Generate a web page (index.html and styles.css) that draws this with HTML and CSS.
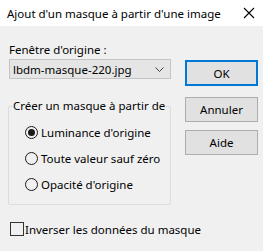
FILE: index.html
```html
<!DOCTYPE html>
<html lang="fr">
<head>
    <meta charset="UTF-8">
    <title>Ajout d'un masque à partir d'une image</title>
    <link rel="stylesheet" href="styles.css">
</head>
<body>
    <div class="titlebar">
        <span class="title">Ajout d'un masque à partir d'une image</span>
        <svg class="close" width="12" height="12" viewBox="0 0 12 12">
            <path d="M1 1 L11 11 M11 1 L1 11" stroke="#000" stroke-width="1.1" fill="none"/>
        </svg>
    </div>
    <div class="dialog">
        <div class="main">
            <div class="field-label">Fenêtre d'origine :</div>
            <div class="select">
                <span>lbdm-masque-220.jpg</span>
                <svg class="chevron" width="9" height="5" viewBox="0 0 9 5">
                    <path d="M0.5 0.5 L4.5 4.5 L8.5 0.5" stroke="#444" stroke-width="1" fill="none"/>
                </svg>
            </div>
            <fieldset class="group">
                <legend>Créer un masque à partir de</legend>
                <div class="radio checked"><span class="circle"></span>Luminance d'origine</div>
                <div class="radio"><span class="circle"></span>Toute valeur sauf zéro</div>
                <div class="radio"><span class="circle"></span>Opacité d'origine</div>
            </fieldset>
            <div class="check"><span class="box"></span>Inverser les données du masque</div>
        </div>
        <div class="buttons">
            <button class="btn default">OK</button>
            <button class="btn">Annuler</button>
            <button class="btn">Aide</button>
        </div>
    </div>
</body>
</html>
```

FILE: styles.css
```css
body {
    margin: 0;
    background-color: #f0f0f0;
    font-family: "Noto Sans", sans-serif;
    font-size: 11.5px;
    color: #000;
}
.titlebar {
    height: 26px;
    background-color: #fff;
    display: flex;
    align-items: center;
    justify-content: space-between;
    padding: 0 7px 0 7px;
}
.close {
    margin-right: 1px;
}
.dialog {
    display: flex;
    padding: 16px 0 0 8px;
}
.main {
    width: 163px;
    flex-shrink: 0;
    white-space: nowrap;
}
.field-label {
    line-height: 16px;
    margin-left: 1px;
}
.select {
    margin: 1px 0 0 1px;
    height: 18px;
    border: 1px solid #c4c4c4;
    background-color: #e5e5e5;
    display: flex;
    align-items: center;
    justify-content: space-between;
    padding: 0 6px 0 3px;
}
.group {
    margin: 19px 0 0 0;
    padding: 5px 0 7px 3px;
    border: 1px solid #dcdcdc;
    border-radius: 2px;
    width: 158px;
}
.group legend {
    padding: 0 1px;
    line-height: 16px;
}
.radio {
    height: 26px;
    display: flex;
    align-items: center;
    padding-left: 13px;
}
.circle {
    flex-shrink: 0;
    width: 11px;
    height: 11px;
    border: 1px solid #1a1a1a;
    border-radius: 50%;
    margin-right: 3px;
    display: flex;
    align-items: center;
    justify-content: center;
}
.radio.checked .circle::after {
    content: "";
    width: 7px;
    height: 7px;
    border-radius: 50%;
    background-color: #1a1a1a;
}
.check {
    margin-top: 16px;
    height: 16px;
    display: flex;
    align-items: center;
    padding-left: 2px;
}
.box {
    flex-shrink: 0;
    width: 12px;
    height: 12px;
    border: 1px solid #333;
    margin-right: 1px;
}
.buttons {
    display: flex;
    flex-direction: column;
    margin: 18px 0 0 14px;
}
.btn {
    width: 73px;
    height: 25px;
    margin-bottom: 8px;
    background-color: #e1e1e1;
    border: 1px solid #adadad;
    font-family: inherit;
    font-size: 11.5px;
    color: #000;
    padding: 0;
}
.btn.default {
    border: 2px solid #0078d7;
    height: 26px;
    margin-bottom: 11px;
}
```
